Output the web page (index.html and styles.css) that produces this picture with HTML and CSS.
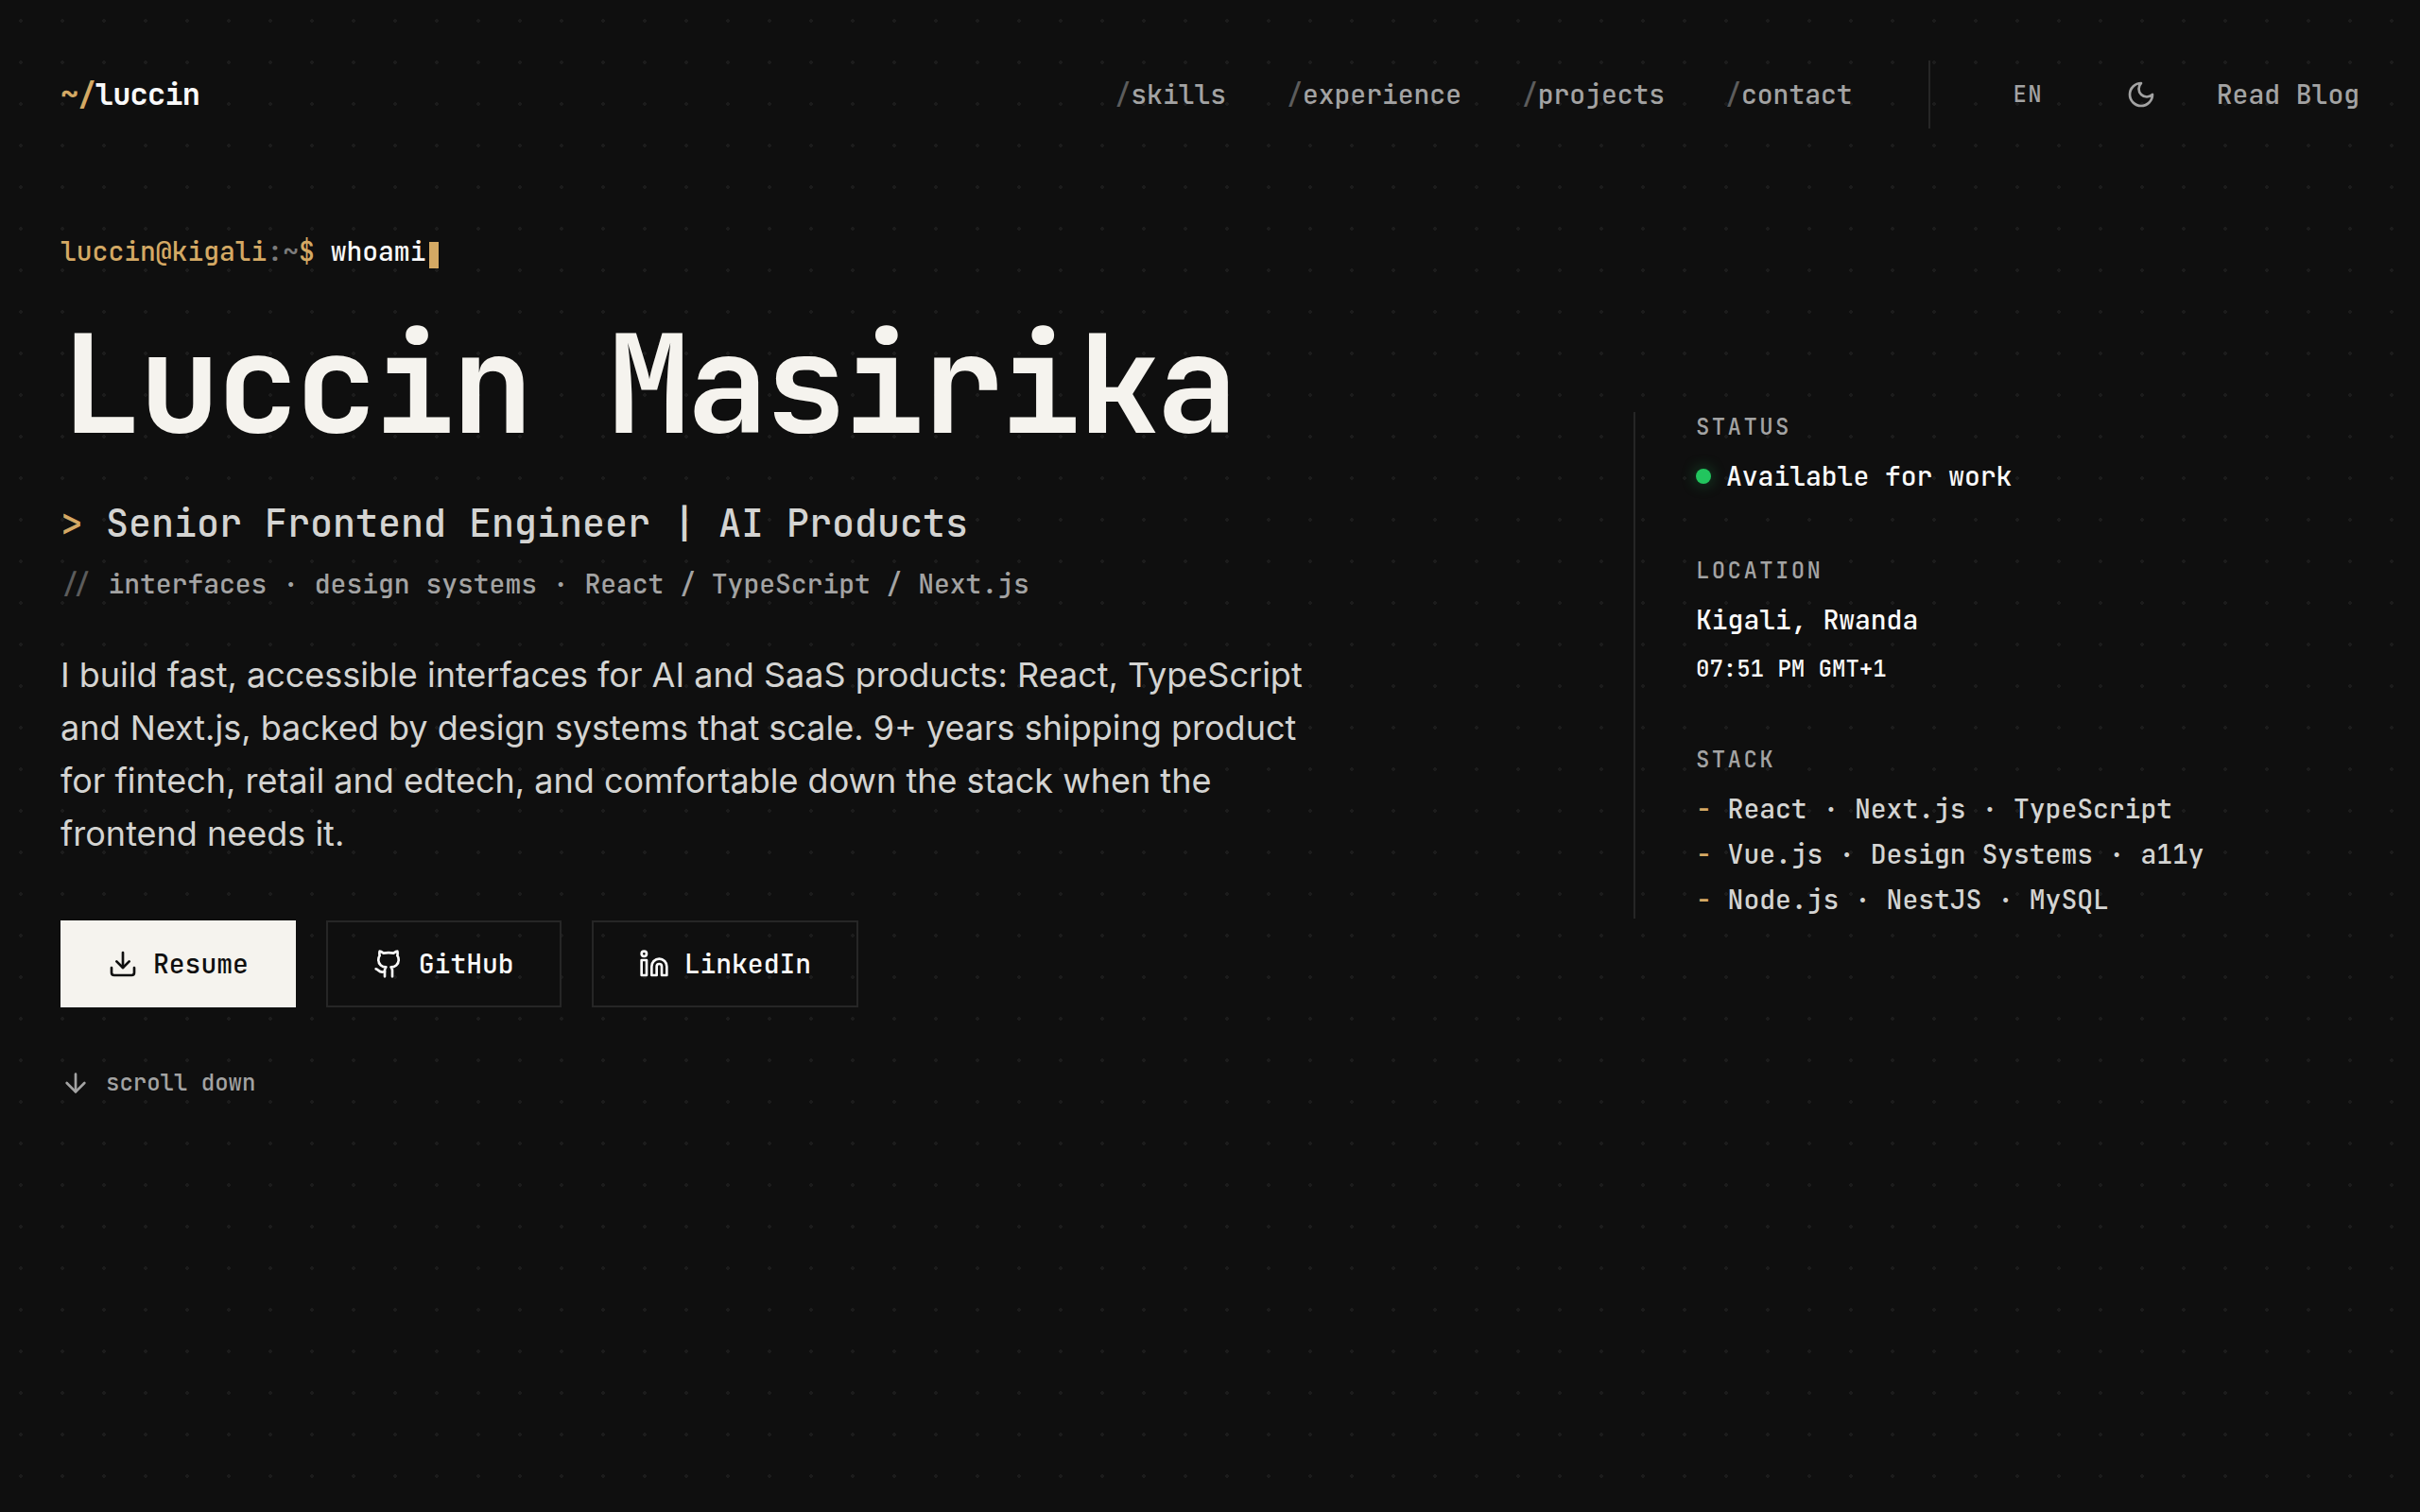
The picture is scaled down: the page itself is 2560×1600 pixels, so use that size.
FILE: index.html
```html
<!DOCTYPE html>
<html lang="en">
<head>
  <meta charset="UTF-8">
  <meta name="viewport" content="width=device-width, initial-scale=1.0">
  <title>Luccin Masirika</title>
  <link rel="stylesheet" href="styles.css">
</head>
<body>
  <!-- Header -->
  <header class="header">
    <a href="#" class="logo"><span class="accent">~/</span>luccin</a>
    <div class="header-right">
      <nav class="nav">
        <a href="#skills"><span class="slash">/</span>skills</a>
        <a href="#experience"><span class="slash">/</span>experience</a>
        <a href="#projects"><span class="slash">/</span>projects</a>
        <a href="#contact"><span class="slash">/</span>contact</a>
      </nav>
      <div class="header-tools">
        <button type="button" class="lang-btn">EN</button>
        <button type="button" class="theme-btn" aria-label="Toggle theme">
          <svg class="icon" viewBox="0 0 24 24"><path d="M12 3a6 6 0 0 0 9 9 9 9 0 1 1-9-9Z"/></svg>
        </button>
        <a href="#blog" class="blog-link">Read Blog</a>
      </div>
    </div>
  </header>

  <!-- Hero -->
  <main class="hero">
    <section class="intro">
      <p class="prompt"><span class="accent">luccin@kigali</span><span class="dim">:~</span><span class="accent">$</span> whoami<span class="cursor"></span></p>
      <h1>Luccin Masirika</h1>
      <p class="role"><span class="accent">&gt;</span> Senior Frontend Engineer | AI Products</p>
      <p class="tags"><span class="slash">//</span> interfaces · design systems · React / TypeScript / Next.js</p>
      <p class="bio">I build fast, accessible interfaces for AI and SaaS products: React, TypeScript and Next.js, backed by design systems that scale. 9+ years shipping product for fintech, retail and edtech, and comfortable down the stack when the frontend needs it.</p>

      <div class="actions">
        <a href="#resume" class="btn btn-primary">
          <svg class="icon" viewBox="0 0 24 24"><path d="M21 15v4a2 2 0 0 1-2 2H5a2 2 0 0 1-2-2v-4"/><path d="m7 10 5 5 5-5"/><path d="M12 15V3"/></svg>
          Resume
        </a>
        <a href="#github" class="btn">
          <svg class="icon" viewBox="0 0 24 24"><path d="M15 22v-4a4.8 4.8 0 0 0-1-3.5c3 0 6-2 6-5.5.08-1.25-.27-2.48-1-3.5.28-1.15.28-2.35 0-3.5 0 0-1 0-3 1.5-2.64-.5-5.36-.5-8 0C6 2 5 2 5 2c-.3 1.15-.3 2.35 0 3.5A5.403 5.403 0 0 0 4 9c0 3.5 3 5.5 6 5.5-.39.49-.68 1.05-.85 1.65-.17.6-.22 1.23-.15 1.85v4"/><path d="M9 18c-4.51 2-5-2-7-2"/></svg>
          GitHub
        </a>
        <a href="#linkedin" class="btn">
          <svg class="icon" viewBox="0 0 24 24"><path d="M16 8a6 6 0 0 1 6 6v7h-4v-7a2 2 0 0 0-4 0v7h-4v-7a6 6 0 0 1 6-6z"/><rect x="2" y="9" width="4" height="12"/><circle cx="4" cy="4" r="2"/></svg>
          LinkedIn
        </a>
      </div>

      <a href="#skills" class="scroll-link">
        <svg class="icon" viewBox="0 0 24 24"><path d="M12 5v14"/><path d="m19 12-7 7-7-7"/></svg>
        scroll down
      </a>
    </section>

    <!-- Sidebar -->
    <aside class="info">
      <div class="info-block">
        <h2>Status</h2>
        <p class="status"><span class="status-dot"></span>Available for work</p>
      </div>
      <div class="info-block">
        <h2>Location</h2>
        <p>Kigali, Rwanda</p>
        <p class="time">07:51 PM GMT+1</p>
      </div>
      <div class="info-block">
        <h2>Stack</h2>
        <ul class="stack">
          <li>React · Next.js · TypeScript</li>
          <li>Vue.js · Design Systems · a11y</li>
          <li>Node.js · NestJS · MySQL</li>
        </ul>
      </div>
    </aside>
  </main>
</body>
</html>
```
FILE: styles.css
```css
:root {
  --bg: #0f0f0f;
  --dot: #1c1c1c;
  --line: #262626;
  --text: #f5f3ee;
  --bright: #fafafa;
  --soft: #d4d4d2;
  --muted: #a3a3a3;
  --dim: #7c7c7c;
  --slash: #5c5c5c;
  --accent: #d4a964;
  --green: #22c55e;
}

* {
  box-sizing: border-box;
}

body {
  margin: 0;
  min-height: 100vh;
  background-color: var(--bg);
  /* Dot grid */
  background-image: radial-gradient(circle, var(--dot) 2px, transparent 2px);
  background-size: 44px 44px;
  color: var(--bright);
  font-family: "JetBrains Mono", "DejaVu Sans Mono", monospace;
  font-size: 28px;
  font-weight: 500;
  line-height: 40px;
}

h1,
h2,
p,
ul {
  margin: 0;
  padding: 0;
}

a {
  color: inherit;
  text-decoration: none;
}

button {
  background: none;
  border: none;
  padding: 0;
  color: inherit;
  font: inherit;
  cursor: pointer;
}

.icon {
  display: block;
  flex: none;
  width: 32px;
  height: 32px;
  fill: none;
  stroke: currentColor;
  stroke-width: 2;
  stroke-linecap: round;
  stroke-linejoin: round;
}

.accent {
  color: var(--accent);
}

.dim {
  color: var(--dim);
}

.slash {
  color: var(--slash);
}

/* Header */
.header {
  display: flex;
  justify-content: space-between;
  align-items: center;
  padding: 64px 64px 0;
}

.logo {
  font-size: 32px;
  font-weight: bold;
  letter-spacing: -0.025em;
}

.header-right {
  display: flex;
  align-items: center;
  gap: 80px;
  color: var(--muted);
}

.nav {
  display: flex;
  gap: 64px;
}

.header-tools {
  display: flex;
  align-items: center;
  gap: 48px;
  height: 72px;
  padding-left: 64px;
  border-left: 2px solid var(--line);
}

.lang-btn {
  padding: 0 0 0 24px;
  font-size: 24px;
  letter-spacing: 0.05em;
}

.theme-btn {
  padding: 20px 16px 20px 40px;
}

.nav a:hover,
.blog-link:hover,
.lang-btn:hover,
.theme-btn:hover {
  color: var(--text);
}

/* Hero */
.hero {
  display: grid;
  grid-template-columns: 2fr 1fr;
  gap: 128px;
  align-items: center;
  padding: 110px 64px 64px;
}

.cursor {
  display: inline-block;
  width: 10px;
  height: 28px;
  margin-left: 4px;
  background-color: var(--accent);
  vertical-align: -8px;
}

.intro h1 {
  margin: 48px 0;
  color: var(--text);
  font-size: 144px;
  line-height: 144px;
  letter-spacing: -0.025em;
}

.role {
  color: var(--soft);
  font-size: 40px;
  line-height: 56px;
}

.tags {
  margin-top: 16px;
  color: var(--muted);
}

.bio {
  max-width: 1344px;
  margin-top: 48px;
  color: var(--soft);
  font-family: Inter, sans-serif;
  font-size: 36px;
  font-weight: 400;
  line-height: 56px;
}

.actions {
  display: flex;
  flex-wrap: wrap;
  gap: 32px;
  margin: 64px 0;
}

.btn {
  display: flex;
  align-items: center;
  gap: 16px;
  padding: 24px 48px;
  border: 2px solid var(--line);
}

.btn:hover {
  border-color: var(--accent);
}

.btn-primary {
  background-color: var(--text);
  border-color: var(--text);
  color: var(--bg);
}

.scroll-link {
  display: flex;
  align-items: center;
  gap: 16px;
  width: fit-content;
  color: var(--muted);
  font-size: 24px;
  line-height: 32px;
}

/* Sidebar */
.info {
  display: flex;
  flex-direction: column;
  gap: 64px;
  padding-left: 64px;
  border-left: 2px solid var(--line);
}

.info-block {
  display: flex;
  flex-direction: column;
  gap: 16px;
}

.info-block h2 {
  color: var(--muted);
  font-size: 24px;
  font-weight: 500;
  line-height: 32px;
  letter-spacing: 0.1em;
  text-transform: uppercase;
}

.status {
  display: flex;
  align-items: center;
  gap: 16px;
}

.status-dot {
  width: 16px;
  height: 16px;
  border-radius: 50%;
  background-color: var(--green);
  box-shadow: 0 0 16px rgba(34, 197, 94, 0.4);
}

.time {
  font-size: 24px;
  line-height: 32px;
}

.stack {
  display: flex;
  flex-direction: column;
  gap: 8px;
  color: var(--soft);
  list-style: none;
}

.stack li::before {
  content: "- ";
  color: var(--accent);
}

/* Small screens */
@media (max-width: 1200px) {
  .header,
  .header-right {
    flex-wrap: wrap;
    gap: 32px;
  }

  .nav {
    flex-wrap: wrap;
    gap: 24px;
  }

  .hero {
    grid-template-columns: 1fr;
  }

  .intro h1 {
    font-size: 72px;
    line-height: 80px;
  }
}
```
